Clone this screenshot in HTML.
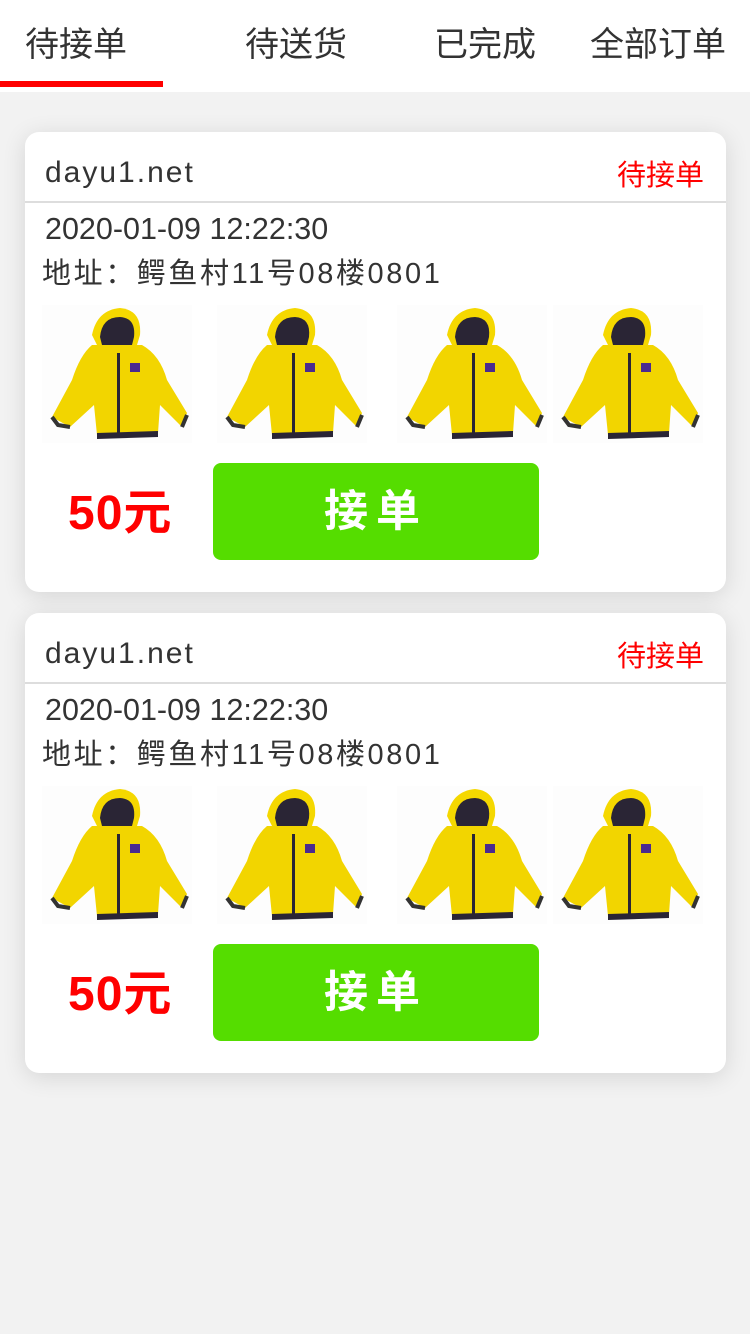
<!DOCTYPE html>
<html><head><meta charset="utf-8"><style>
*{margin:0;padding:0;box-sizing:border-box}
body{width:750px;height:1334px;background:#f2f2f2;font-family:"Liberation Sans","Noto Sans CJK SC",sans-serif;position:relative;overflow:hidden}
.tabs{position:absolute;left:0;top:0;width:750px;height:92px;background:#fff}
.tab{position:absolute;top:22px;font-size:34px;color:#333;line-height:46px}
.ul{position:absolute;left:0;top:81px;width:163px;height:6px;background:#f00}
.card{position:absolute;left:25px;width:701px;height:460px;background:#fff;border-radius:14px;box-shadow:0 4px 24px rgba(0,0,0,.12)}
.site{position:absolute;left:20px;top:24px;font-size:30px;color:#333;letter-spacing:2px}
.st{position:absolute;right:22px;top:20px;font-size:29px;color:#f00}
.line{position:absolute;left:0;top:69px;width:701px;height:2px;background:#ddd}
.dt{position:absolute;left:20px;top:80px;font-size:30.5px;color:#333}
.ad{position:absolute;left:17px;top:118px;font-size:29px;color:#333;letter-spacing:2.6px}
.img{position:absolute;top:173px;width:150px;height:138px}
.price{position:absolute;left:43px;top:341px;font-size:48px;font-weight:bold;color:#f00;letter-spacing:1px}
.btn{position:absolute;left:188px;top:331px;width:326px;height:97px;background:#55dd00;border-radius:8px;color:#fff;font-size:44px;font-weight:bold;text-align:center;line-height:97px;letter-spacing:8px}
</style></head><body>
<svg width="0" height="0" style="position:absolute"><defs><symbol id="j" viewBox="0 0 150 138">
<rect width="150" height="138" fill="#fdfdfd"/>
<path d="M50 30 Q55 5 78 3 Q100 5 98 30 L95 40 L55 40Z" fill="#f5d800"/>
<path d="M58 32 Q60 12 78 12 Q94 13 92 32 L88 48 L62 48Z" fill="#2a2535"/>
<path d="M50 40 L100 40 Q118 50 125 75 L145 108 L140 122 L118 100 L116 128 L55 130 L52 100 L28 122 L10 112 L30 75 Q38 50 50 40Z" fill="#f2d500"/>
<path d="M55 128 L116 126 L116 132 L55 134Z" fill="#2a2535"/>
<rect x="75" y="48" width="3" height="82" fill="#2a2535"/>
<rect x="88" y="58" width="10" height="9" fill="#4a2a90"/>
<path d="M10 112 L16 120 L28 122 M140 122 L145 110" stroke="#333" stroke-width="4" fill="none"/>
</symbol></defs></svg>
<div class="tabs">
<div class="tab" style="left:25px">待接单</div>
<div class="tab" style="left:245px">待送货</div>
<div class="tab" style="left:434px">已完成</div>
<div class="tab" style="left:590px">全部订单</div>
<div class="ul"></div>
</div>
<div class="card" style="top:132px">
<div class="site">dayu1.net</div><div class="st">待接单</div><div class="line"></div>
<div class="dt">2020-01-09 12:22:30</div><div class="ad">地址：鳄鱼村11号08楼0801</div>
<svg class="img" style="left:17px"><use href="#j"/></svg>
<svg class="img" style="left:192px"><use href="#j"/></svg>
<svg class="img" style="left:372px"><use href="#j"/></svg>
<svg class="img" style="left:528px"><use href="#j"/></svg>
<div class="price">50元</div><div class="btn">接单</div>
</div>
<div class="card" style="top:613px">
<div class="site">dayu1.net</div><div class="st">待接单</div><div class="line"></div>
<div class="dt">2020-01-09 12:22:30</div><div class="ad">地址：鳄鱼村11号08楼0801</div>
<svg class="img" style="left:17px"><use href="#j"/></svg>
<svg class="img" style="left:192px"><use href="#j"/></svg>
<svg class="img" style="left:372px"><use href="#j"/></svg>
<svg class="img" style="left:528px"><use href="#j"/></svg>
<div class="price">50元</div><div class="btn">接单</div>
</div>
</body></html>
